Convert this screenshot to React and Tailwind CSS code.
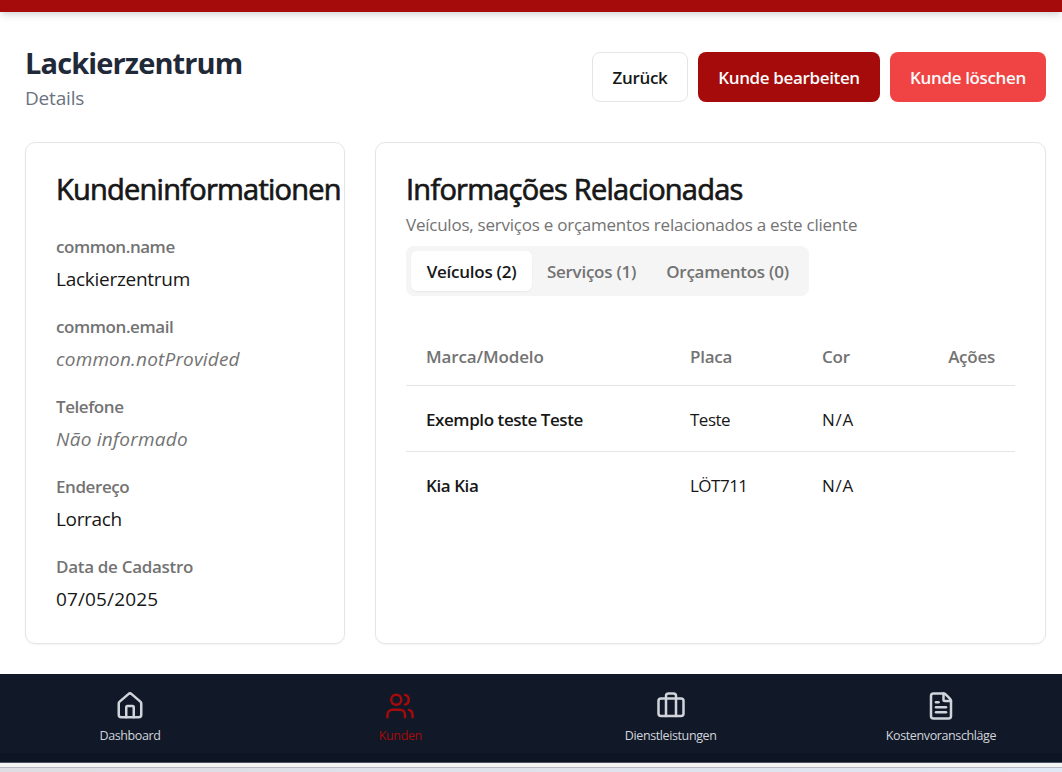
import { House, Users, FileText } from "lucide-react";

function BriefcaseIcon() {
  return (
    <svg width="30" height="30" viewBox="0 0 24 24" fill="none" stroke="currentColor" strokeWidth="2" strokeLinecap="round" strokeLinejoin="round">
      <rect width="20" height="14" x="2" y="6" rx="2" />
      <path d="M16 20V4a2 2 0 0 0-2-2h-4a2 2 0 0 0-2 2v16" />
    </svg>
  );
}

const fields = [
  { label: "common.name", labelStyle: "tracking-[-0.027em]", value: "Lackierzentrum", style: "tracking-[-0.014em]" },
  { label: "common.email", labelStyle: "tracking-[-0.025em]", value: "common.notProvided", style: "tracking-[0.009em] italic text-[#737373]" },
  { label: "Telefone", labelStyle: "tracking-[-0.026em]", value: "Não informado", style: "tracking-[0.014em] italic text-[#737373]" },
  { label: "Endereço", labelStyle: "tracking-[-0.025em]", value: "Lorrach", style: "tracking-[-0.018em]" },
  { label: "Data de Cadastro", labelStyle: "tracking-[-0.018em]", value: "07/05/2025", style: "tracking-[0.007em]" },
];

const vehicles = [
  { model: "Exemplo teste Teste", plate: "Teste", color: "N/A" },
  { model: "Kia Kia", plate: "LÖT711", color: "N/A" },
];

const nav = [
  { label: "Dashboard", icon: <House size={30} /> },
  { label: "Kunden", icon: <Users size={30} />, active: true },
  { label: "Dienstleistungen", icon: <BriefcaseIcon /> },
  { label: "Kostenvoranschläge", icon: <FileText size={30} /> },
];

function CardTitle({ children }) {
  return (
    <h2 className="text-[29px] leading-[32px] font-medium tracking-[-0.026em] whitespace-nowrap [-webkit-text-stroke:0.7px_currentColor]">
      {children}
    </h2>
  );
}

export default function App() {
  return (
    <div className="flex h-[772px] w-[1062px] flex-col overflow-hidden bg-white font-['Open_Sans',sans-serif] text-[#171717]">
      <div className="h-3 shrink-0 bg-[#a50b0b] shadow-[0_5px_8px_-1px_rgba(0,0,0,0.1),0_3px_5px_-2px_rgba(0,0,0,0.1)]" />
      <main className="flex h-[662px] shrink-0 flex-col pr-4 pl-[25px]">
        <header className="flex h-[130px] shrink-0 justify-between pt-[33px]">
          <div>
            <h1 className="text-[29px] leading-[36px] font-bold tracking-[-0.03em] text-[#1f2937]">Lackierzentrum</h1>
            <p className="mt-0.5 text-[19px] leading-[30px] tracking-[-0.01em] text-[#6b7280]">Details</p>
          </div>
          <div className="flex gap-2.5 pt-[7px] text-[17px] font-semibold tracking-[-0.021em]">
            <button className="h-[50px] w-24 rounded-lg border border-[#e5e5e5] pt-0.5">Zurück</button>
            <button className="h-[50px] w-[182px] rounded-lg bg-[#a50b0b] pt-0.5 text-[#fafafa]">Kunde bearbeiten</button>
            <button className="h-[50px] w-[156px] rounded-lg bg-[#f04444] pt-0.5 text-[#fafafa]">Kunde löschen</button>
          </div>
        </header>
        <div className="flex gap-[30px]">
          <section className="h-[502px] w-80 shrink-0 rounded-[10px] border border-[#e5e5e5] px-[30px] pt-[30px] shadow-[0_1px_2px_rgba(0,0,0,0.05)]">
            <CardTitle>Kundeninformationen</CardTitle>
            <dl className="mt-[29px] flex flex-col gap-[19px]">
              {fields.map((f) => (
                <div key={f.label}>
                  <dt className={`text-[17px] leading-[25px] font-semibold text-[#737373] ${f.labelStyle}`}>{f.label}</dt>
                  <dd className={`mt-[5px] text-[19px] leading-[31px] ${f.style}`}>{f.value}</dd>
                </div>
              ))}
            </dl>
          </section>
          <section className="h-[502px] w-[671px] shrink-0 rounded-[10px] border border-[#e5e5e5] px-[30px] pt-[30px] shadow-[0_1px_2px_rgba(0,0,0,0.05)]">
            <CardTitle>Informações Relacionadas</CardTitle>
            <p className="mt-[7px] text-[17px] leading-[25px] tracking-[-0.014em] text-[#737373]">Veículos, serviços e orçamentos relacionados a este cliente</p>
            <div className="mt-[9px] flex h-[50px] w-[403px] items-center rounded-lg bg-[#f5f5f5] px-[5px] text-[17px] font-semibold tracking-[-0.015em] whitespace-nowrap text-[#737373]">
              <button className="h-10 w-[121px] rounded-md bg-white pt-0.5 text-[#171717] shadow-[0_1px_2px_rgba(0,0,0,0.05)]">Veículos (2)</button>
              <button className="h-10 w-[119px] pt-0.5">Serviços (1)</button>
              <button className="h-10 w-[153px] pt-0.5">Orçamentos (0)</button>
            </div>
            <table className="mt-[29px] w-[609px] table-fixed text-[17px] tracking-[-0.02em]">
              <thead>
                <tr className="h-[60px] border-b border-[#e5e5e5] text-left tracking-[-0.015em] text-[#737373]">
                  <th className="w-[264px] pt-[3px] pl-5 font-semibold tracking-[-0.008em]">Marca/Modelo</th>
                  <th className="w-[132px] pt-[3px] pl-5 font-semibold">Placa</th>
                  <th className="w-[113px] pt-[3px] pl-5 font-semibold">Cor</th>
                  <th className="pt-[3px] pr-5 text-right font-semibold">Ações</th>
                </tr>
              </thead>
              <tbody>
                {vehicles.map((v) => (
                  <tr key={v.model} className="h-[66px] border-b border-[#e5e5e5] last:border-0">
                    <td className="pt-[3px] pl-5 font-semibold tracking-[-0.025em]">{v.model}</td>
                    <td className="pt-[3px] pl-5 tracking-[-0.03em]">{v.plate}</td>
                    <td className="pt-[3px] pl-5 tracking-[0.045em]">{v.color}</td>
                    <td />
                  </tr>
                ))}
              </tbody>
            </table>
          </section>
        </div>
      </main>
      <nav className="flex h-[79px] w-[1071px] shrink-0 justify-between bg-[#111827] text-[#d1d5db]">
        {nav.map((n) => (
          <a key={n.label} className={n.active ? "flex w-[260px] flex-col items-center pt-[17px] text-[#a50b0b]" : "flex w-[260px] flex-col items-center pt-[17px]"}>
            {n.icon}
            <span className="mt-[5px] text-[12.5px] leading-5 tracking-[-0.031em]">{n.label}</span>
          </a>
        ))}
      </nav>
      <div className="h-[10px] shrink-0 border-b border-[#4b5365] bg-[#0d1423]" />
      <div className="h-[5px] shrink-0 border-b border-[#b5b6be] bg-[#f3f3f3]" />
      <div className="flex-1 bg-linear-to-r from-[#dddde3] to-[#dfe8f4]" />
    </div>
  );
}
